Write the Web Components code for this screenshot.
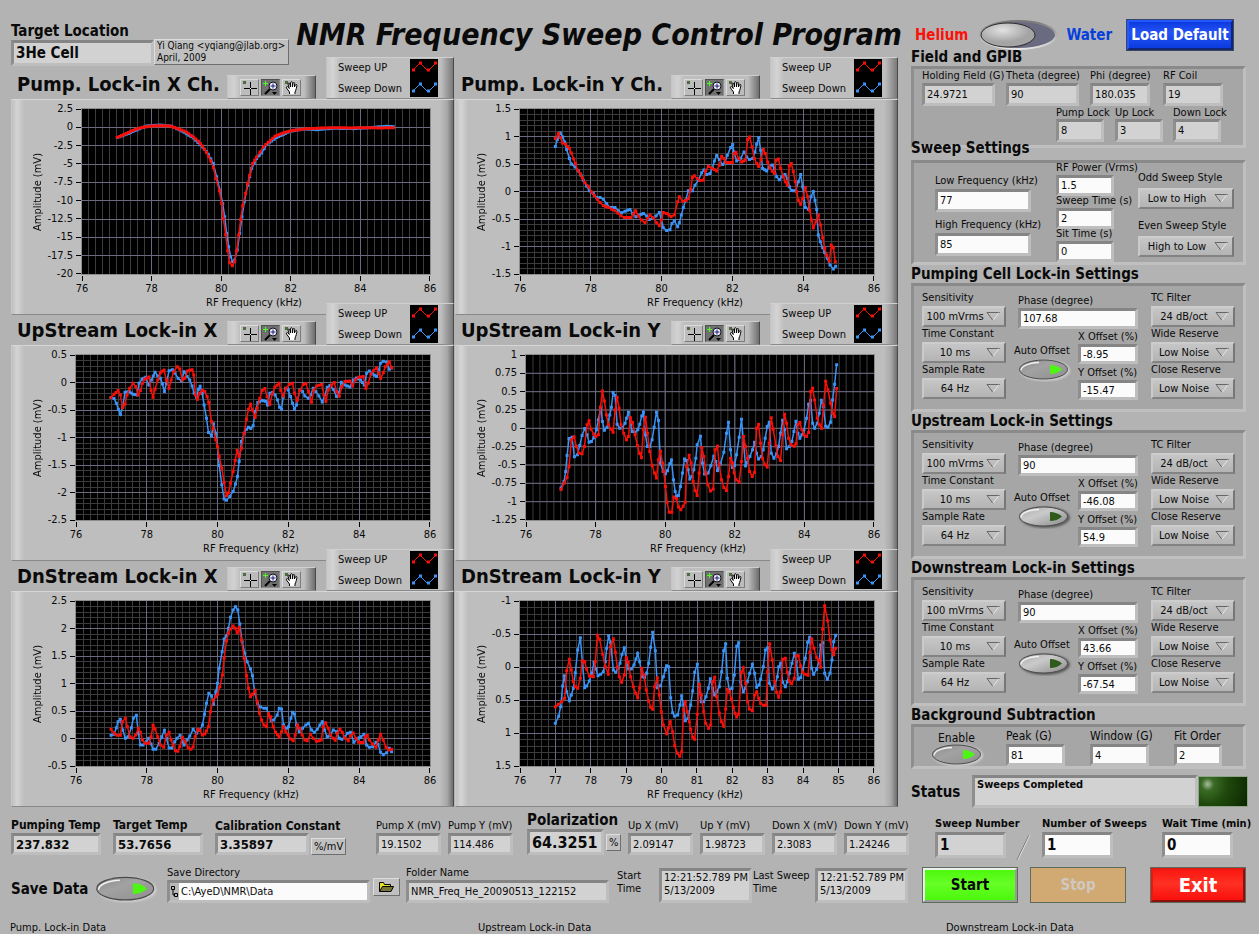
<!DOCTYPE html>
<html lang="en">
<head>
<meta charset="utf-8">
<title>NMR Frequency Sweep Control Program</title>
<style>
  html {
    overflow: hidden;
  }
  body {
    margin: 0;
    background: #b3b3b3;
    color: #0a0a0a;
    font: 11px/14px "DejaVu Sans Condensed", "Noto Sans", sans-serif;
  }
</style>
</head>
<body>
<nmr-app></nmr-app>

<script>
// rules that every shadow root starts with
const base = `
  *, *::before, *::after { box-sizing: border-box; }
  :host { display: block; }
  button, input, select, textarea { font: inherit; color: inherit; margin: 0; border-radius: 0; }
  label { white-space: nowrap; }
`;

function attach(el, html) {
  el.attachShadow({ mode: 'open' }).innerHTML = html;
}

/** Recorded sweeps. Points are plot units inside `box` (x, y, width, height). */
const charts = {
  pumpX: {
    title: 'Pump. Lock-in X Ch.', axis: 71, box: [246, 326, 1044, 496],
    x: [76, 78, 80, 82, 84, 86], y: [2.5, 0, -2.5, -5, -7.5, -10, -12.5, -15, -17.5, -20], xMinor: 10, yMinor: 1,
    up: '352,411 372,403 392,393 412,385 434,380 455,377 480,376 510,377 530,384 545,389 560,396 580,410 595,423 607,437 620,457 632,482 640,502 648,535 658,572 665,610 670,655 677,703 683,752 689,788 697,797 704,785 710,752 716,705 722,658 728,617 737,580 743,550 749,525 758,490 770,470 780,455 790,440 805,426 825,408 850,398 875,391 910,386 950,384 1000,382 1050,383 1100,382 1140,383 1180,382',
    down: '352,412 392,397 412,388 440,377 480,374 515,378 545,392 580,413 607,440 625,462 640,490 650,530 660,570 668,610 674,650 680,700 686,740 692,770 698,785 704,780 712,750 719,700 726,650 733,605 743,555 755,505 770,475 785,458 800,433 830,412 870,393 910,386 950,388 1000,384 1060,385 1110,382 1160,378 1180,379',
  },
  pumpY: {
    title: 'Pump. Lock-in Y Ch.', axis: 65, box: [210, 326, 1062, 496],
    x: [76, 78, 80, 82, 84, 86], y: [1.5, 1, 0.5, 0, -0.5, -1, -1.5], xMinor: 10, yMinor: 5,
    up: '316,415 325,400 331,412 338,428 347,432 358,445 364,458 371,476 376,490 383,510 391,521 397,533 405,548 415,558 425,576 433,586 442,597 450,607 460,616 475,622 485,627 495,632 503,639 513,647 523,652 543,652 550,642 557,632 565,648 575,660 585,668 593,655 600,645 610,653 620,668 628,677 634,660 640,637 650,640 663,649 673,645 683,605 688,590 698,603 708,601 715,595 722,568 727,532 733,527 742,535 750,541 760,540 767,512 775,499 785,503 800,512 808,495 815,468 822,475 828,487 847,487 853,460 858,457 866,475 875,485 886,480 893,418 899,410 906,440 913,475 920,490 926,499 933,478 940,448 946,460 953,485 960,503 967,513 973,520 978,480 985,476 992,505 1000,530 1006,545 1012,555 1018,497 1024,490 1030,515 1036,545 1040,575 1045,600 1052,612 1058,595 1066,562 1073,590 1079,630 1085,660 1090,683 1098,665 1105,645 1112,675 1118,713 1124,745 1130,765 1138,783 1144,735 1150,743 1156,785',
    down: '316,439 322,418 331,398 338,410 344,425 350,448 358,475 365,492 375,500 385,512 393,525 400,540 410,558 418,572 430,580 440,592 450,592 460,597 470,611 480,622 495,622 505,632 515,638 525,633 540,628 548,640 558,650 568,645 580,640 590,648 598,658 608,655 618,648 628,637 634,657 640,683 650,691 660,689 666,670 673,662 683,680 688,668 694,645 700,622 707,600 715,572 727,572 735,555 745,540 755,518 762,509 770,523 780,520 787,503 793,482 800,466 808,478 818,493 825,485 832,465 842,442 848,433 852,455 860,482 872,474 882,455 890,470 898,478 908,475 915,455 920,432 926,412 932,450 938,505 950,512 958,500 967,494 973,505 980,530 988,539 995,530 1005,523 1012,535 1018,560 1025,571 1037,572 1045,545 1052,523 1058,560 1066,622 1075,627 1083,590 1090,574 1095,600 1100,628 1105,705 1111,725 1118,743 1124,757 1132,775 1140,795 1150,807 1157,799',
  },
  upX: {
    title: 'UpStream Lock-in X', axis: 65, box: [229, 165, 1061, 496],
    x: [76, 78, 80, 82, 84, 86], y: [0.5, 0, -0.5, -1, -1.5, -2, -2.5], xMinor: 10, yMinor: 5,
    up: '334,293 343,283 355,272 362,285 369,323 376,312 382,285 390,265 400,250 408,260 415,285 422,272 428,250 435,238 448,231 454,272 460,292 466,268 474,240 482,218 493,210 500,240 508,265 514,240 522,215 532,200 540,207 548,240 555,235 563,213 577,209 582,225 587,285 593,298 600,280 608,271 615,275 622,290 627,308 635,365 640,385 648,420 653,440 658,470 666,505 673,548 680,588 686,580 692,550 700,515 706,482 712,452 718,470 725,445 733,400 740,358 746,328 752,313 758,330 766,352 772,325 780,295 787,272 795,266 802,290 810,313 817,283 825,262 838,250 843,272 850,288 858,265 868,254 878,250 884,280 892,302 900,272 910,254 918,251 926,275 935,307 942,270 950,258 965,254 972,285 978,304 985,270 995,255 1003,248 1010,275 1018,289 1026,260 1035,245 1050,243 1058,258 1066,240 1076,232 1090,230 1098,265 1105,250 1113,222 1120,212 1130,203 1136,220 1142,235 1150,218 1156,200 1168,185 1175,203',
    down: '334,293 343,296 350,310 356,328 362,344 369,320 376,277 388,275 400,283 412,285 418,250 427,238 438,232 447,255 455,240 466,217 474,228 482,235 488,252 494,275 500,250 508,212 518,209 526,220 535,235 545,243 553,215 562,230 570,240 577,258 583,280 590,292 596,268 601,259 607,280 613,315 620,355 626,398 635,407 641,372 648,400 653,440 658,497 666,555 673,598 680,602 690,590 700,575 707,553 713,530 718,485 725,425 733,400 740,388 746,382 753,386 760,378 766,335 774,308 785,301 797,304 803,315 810,280 818,278 826,285 833,300 839,322 845,328 850,292 857,265 865,270 872,290 878,310 884,328 890,315 900,270 908,275 915,288 925,295 932,285 940,265 948,275 957,288 967,306 975,285 982,262 990,257 1000,268 1010,290 1017,278 1024,247 1035,255 1050,261 1060,240 1070,234 1082,240 1093,255 1100,220 1108,213 1118,222 1130,230 1136,210 1142,190 1150,184 1160,186 1168,208 1175,204',
  },
  upY: {
    title: 'UpStream Lock-in Y', axis: 71, box: [229, 165, 1043, 496],
    x: [76, 78, 80, 82, 84, 86], y: [1, 0.75, 0.5, 0.25, 0, -0.25, -0.5, -0.75, -1, -1.25], xMinor: 10, yMinor: 1,
    up: '334,569 343,550 352,533 358,500 365,420 373,411 380,440 388,460 397,462 404,440 412,375 418,363 424,388 432,403 438,410 446,405 452,322 458,273 464,303 470,345 476,375 484,388 490,397 496,330 502,292 508,325 514,375 522,400 530,420 536,410 542,354 548,368 556,405 563,437 569,460 575,473 581,390 587,352 593,400 600,455 607,497 614,520 620,535 626,480 632,454 638,490 642,515 647,560 652,608 658,638 666,638 672,592 680,597 686,622 693,630 700,620 706,608 711,500 718,466 724,490 730,545 736,572 742,587 748,520 756,443 762,470 768,520 774,555 782,574 790,568 796,450 803,439 808,495 815,540 822,563 830,572 836,530 842,475 848,490 853,520 859,540 868,547 875,485 881,410 887,440 893,475 899,515 907,530 914,518 920,385 926,374 932,430 938,475 945,495 952,502 958,430 964,354 970,388 978,438 984,470 992,482 998,405 1004,343 1010,370 1016,415 1023,435 1033,439 1038,432 1044,375 1050,368 1056,390 1062,405 1070,410 1076,398 1082,275 1088,265 1094,300 1102,355 1108,375 1115,385 1121,315 1127,244 1134,270 1142,310 1148,340 1154,350 1160,266',
    down: '334,565 343,545 348,515 352,467 358,416 367,412 374,471 383,465 390,437 397,407 405,386 412,405 418,427 425,425 432,414 440,390 446,360 453,322 458,365 464,391 472,382 480,345 485,322 490,278 496,287 502,373 510,385 518,384 526,370 530,355 536,337 542,375 548,395 556,397 564,390 570,373 576,348 581,337 587,405 593,440 600,440 607,420 613,382 620,337 626,362 632,490 640,515 647,522 653,513 660,492 665,481 671,540 676,575 680,590 686,587 692,560 698,520 704,478 710,482 715,510 720,538 726,530 732,510 738,475 742,435 752,409 758,490 764,523 775,520 783,498 792,469 798,485 803,512 812,492 822,457 830,400 836,367 842,450 848,503 854,497 860,465 868,412 875,358 881,430 887,498 893,487 900,470 908,450 914,427 920,460 926,478 934,470 940,450 946,415 952,380 958,367 964,460 972,475 980,462 986,440 992,400 998,361 1004,390 1010,447 1018,440 1026,425 1032,395 1038,364 1044,400 1050,415 1056,405 1062,390 1070,355 1076,313 1082,302 1088,370 1094,385 1102,370 1108,340 1114,301 1120,320 1127,379 1134,382 1142,367 1148,300 1154,253 1160,194',
  },
  dnX: {
    title: 'DnStream Lock-in X', axis: 65, box: [229, 168, 1061, 495],
    x: [76, 78, 80, 82, 84, 86], y: [2.5, 2, 1.5, 1, 0.5, 0, -0.5], xMinor: 10, yMinor: 5,
    up: '334,553 344,565 352,571 362,571 368,530 377,520 383,545 391,575 400,580 408,570 416,550 422,562 428,585 436,595 448,595 454,575 460,541 466,552 474,575 482,600 492,607 500,570 508,562 514,585 520,600 527,617 534,619 540,605 548,577 556,590 565,608 573,613 580,606 586,575 594,553 600,556 608,570 615,567 620,558 626,545 632,500 640,465 648,455 653,448 660,425 668,390 673,340 680,288 686,265 692,252 700,243 706,250 712,263 718,248 725,285 733,340 740,392 746,430 752,455 758,448 766,436 772,470 779,505 785,525 792,540 800,545 806,506 812,515 820,545 827,562 838,577 845,560 851,545 858,560 865,570 872,582 880,587 886,570 893,540 900,550 907,570 915,585 922,587 932,568 940,580 950,589 964,585 970,545 977,533 985,550 992,570 1000,580 1006,586 1012,565 1020,553 1027,562 1035,580 1045,587 1052,572 1060,564 1068,580 1076,592 1090,593 1096,575 1102,571 1108,585 1118,597 1128,607 1135,585 1142,568 1150,585 1158,607 1166,615 1175,613',
    down: '334,571 343,568 350,548 355,530 362,523 369,555 377,580 385,575 395,548 401,519 410,511 416,565 422,600 430,600 440,590 447,580 454,597 460,613 468,613 478,595 486,575 494,556 500,580 508,609 516,609 525,590 532,580 541,571 548,590 553,600 562,585 570,573 580,553 590,565 600,555 608,540 614,508 620,475 627,445 635,452 641,478 648,440 653,415 658,370 667,320 673,282 680,273 686,250 692,217 700,195 707,185 714,195 720,237 727,290 735,325 742,350 752,372 758,392 765,445 773,475 782,486 792,490 800,490 806,510 814,527 822,525 832,510 838,490 845,492 851,540 860,550 866,545 873,520 878,502 884,507 890,540 898,560 908,550 918,540 926,535 935,555 943,562 952,553 960,540 967,530 974,555 982,575 990,572 1000,555 1010,560 1018,580 1026,583 1035,575 1043,565 1052,562 1062,592 1072,582 1083,575 1092,568 1100,600 1108,607 1118,605 1128,592 1134,598 1142,622 1150,629 1160,623 1168,610 1175,620',
  },
  dnY: {
    title: 'DnStream Lock-in Y', axis: 65, box: [210, 168, 1062, 495],
    x: [76, 77, 78, 79, 80, 81, 82, 83, 84, 85, 86], y: [-1, -0.5, 0, 0.5, 1, 1.5], xMinor: 5, yMinor: 5,
    up: '316,485 325,478 335,470 344,460 350,377 358,343 364,375 370,410 376,425 383,430 391,400 397,347 404,350 410,373 418,393 430,395 436,350 442,271 449,283 458,328 466,365 475,388 481,305 490,281 496,322 502,367 508,395 515,412 523,390 529,338 535,352 542,395 550,425 557,445 563,458 569,428 575,370 582,390 589,435 596,468 602,487 608,493 614,425 622,398 628,450 634,500 640,540 650,566 655,550 661,530 668,560 674,602 682,625 689,634 695,620 701,495 706,470 712,500 718,530 722,553 728,577 734,583 742,508 748,418 754,450 761,500 767,535 776,550 782,540 788,410 794,397 800,455 808,505 814,530 821,544 827,492 832,433 838,440 844,462 850,487 855,505 860,516 866,507 874,382 880,368 887,415 893,470 898,492 907,497 914,450 920,440 926,460 932,475 940,481 948,481 953,380 959,296 967,345 974,410 980,442 986,457 992,440 998,343 1006,340 1012,382 1018,408 1025,416 1033,400 1039,332 1045,332 1052,362 1058,382 1066,388 1074,391 1080,322 1085,281 1092,310 1100,338 1106,345 1112,367 1118,253 1124,182 1133,227 1140,285 1146,315 1151,329 1157,310',
    down: '316,535 326,514 332,485 338,423 343,392 350,440 358,467 364,450 370,430 376,383 383,315 391,278 397,350 404,428 410,423 418,408 425,385 432,352 438,372 444,392 452,388 460,380 466,350 470,310 476,272 482,293 490,375 497,382 504,370 510,355 516,328 523,308 529,345 536,372 544,372 552,360 558,342 563,325 569,350 577,395 584,398 590,385 596,355 602,307 608,262 616,317 622,428 632,422 640,395 646,375 650,362 656,365 662,458 668,503 674,514 683,510 690,480 695,452 701,480 706,527 714,520 722,480 728,438 734,382 742,358 748,425 754,470 761,470 768,455 775,430 781,401 788,430 794,450 800,440 808,425 815,380 821,317 827,296 832,400 838,435 846,430 853,390 860,304 866,293 872,410 880,440 886,430 892,410 899,385 907,358 914,385 920,427 927,420 932,403 940,365 946,315 953,308 958,415 967,432 975,420 982,395 986,365 992,355 998,412 1006,425 1012,410 1018,385 1026,355 1033,325 1039,350 1045,403 1052,398 1058,375 1066,340 1073,292 1079,277 1085,370 1091,388 1100,373 1108,345 1112,300 1118,293 1124,385 1132,403 1140,385 1146,345 1151,290 1157,271',
  },
};

// fills long segments so that a marker comes about every 7 units
function samples(str) {
  const pts = str.split(' ').map((p) => p.split(',').map(Number));
  const out = [pts[0]];
  for (let i = 1; i < pts.length; i++) {
    const [x0, y0] = pts[i - 1];
    const [x1, y1] = pts[i];
    const n = Math.max(1, Math.round((x1 - x0) / 7));
    for (let k = 1; k <= n; k++) {
      out.push([x0 + (x1 - x0) * k / n, y0 + (y1 - y0) * k / n]);
    }
  }
  return out;
}

function gridPath([x, y, w, h], nx, ny) {
  let d = '';
  for (let i = 1; i < nx; i++) d += `M${x + w * i / nx} ${y}v${h}`;
  for (let i = 1; i < ny; i++) d += `M${x} ${y + h * i / ny}h${w}`;
  return d;
}

class LvTools extends HTMLElement {
  connectedCallback() {
    attach(this, `
<style>
  ${base}
  :host {
    display: flex;
    justify-content: center;
    gap: 2px;
    width: 89px;
    height: 24px;
    padding: 3px 2px 0 0;
    background: linear-gradient(90deg, #c8c8c8, #d2d2d2 6px, #bebebe 12px, #bebebe 76px, #6e6e6e);
    border: 1px solid;
    border-color: #cfcfcf #4a4a4a #8a8a8a #c4c4c4;
  }
  button {
    width: 19px;
    height: 17px;
    padding: 0;
    border: 1px solid;
    border-color: #dcdcdc #7c7c7c #7c7c7c #dcdcdc;
    background: #bcbcbc;
  }
  button[aria-pressed=true] {
    background: #707070;
    border-color: #505050 #8c8c8c #8c8c8c #505050;
  }
  svg { display: block; }
</style>
<button aria-label="Cursor"><svg width="17" height="15"><path fill="#4d6b3c" d="M2 1h3v3H2z"/><path stroke="#000" d="M9.500 2v13M3 8.500h13"/><path fill="#fff" d="M9 8h1v1H9z"/></svg></button>
<button aria-label="Zoom" aria-pressed="true"><svg width="17" height="15"><path stroke="#4cff1c" d="M1 3.500h5M3.500 1v5"/><path stroke="#000" stroke-width="2" d="M8 9l-5 5"/><circle cx="11" cy="6" r="4" fill="#e8e8ff" stroke="#111"/><path stroke="#22226a" d="M8.500 6h5M11 3.500v5"/><path d="M10 12h5l-2.500 3z"/></svg></button>
<button aria-label="Pan"><svg width="17" height="15"><path fill="#4d6b3c" d="M2 1h3v3H2z"/><path fill="#fff" stroke="#000" d="M6.500 14v-2l-3-4c-.5-1.500 1-2 2-.5l.8 1L5 4c0-1.200 1.500-1.300 1.800 0l.7 3V2.700c0-1.300 1.800-1.300 1.900 0V7l.6-3.700c.2-1.200 1.800-1 1.700.2L11.400 7l1-2c.5-1 1.800-.5 1.500.6-.4 2-.7 4-1.900 6.400v2"/></svg></button>`);
  }
}

class LvLegend extends HTMLElement {
  connectedCallback() {
    attach(this, `
<style>
  ${base}
  :host {
    display: flex;
    justify-content: space-between;
    width: 128px;
    height: 42px;
    padding: 1px 15px 0 11px;
    background: linear-gradient(90deg, #c8c8c8, #d4d4d4 6px, #bebebe 13px, #bebebe 114px, #7a7a7a);
    border: 1px solid;
    border-color: #d0d0d0 #4a4a4a #8a8a8a #c4c4c4;
  }
  span { display: block; line-height: 21px; margin-top: -2px; }
  span + span { margin-top: 0; }
  svg { background: #000; display: block; }
</style>
<div><span>Sweep UP</span><span>Sweep Down</span></div>
<svg width="28" height="38" fill="none">
  <g stroke="#f80f08"><path d="M3 11l7-7 8 8 8-8"/><path stroke-width="3" d="M2 11h3M9 4h3M17 11h3M24 4h3"/></g>
  <g stroke="#3a93f5"><path d="M3 32l7-7 8 8 8-8"/><path stroke-width="3" d="M2 32h3M9 25h3M17 32h3M24 25h3"/></g>
</svg>`);
  }
}

class LvChart extends HTMLElement {
  connectedCallback() {
    const c = charts[this.getAttribute('data')];
    const trace = (str, color) => {
      const pts = samples(str);
      return `<g stroke="${color}"><path class="line" d="M${pts.map((p) => p.join(' ')).join('L')}"/>
        <path class="dots" d="${pts.map((p) => `M${p.join(' ')}h.01`).join('')}"/></g>`;
    };
    const nx = c.x.length - 1;
    const ny = c.y.length - 1;
    attach(this, `
<style>
  ${base}
  :host { height: 258px; min-width: 0; }
  header { display: flex; align-items: flex-end; height: 42px; }
  h2 {
    flex: 1;
    margin: 0;
    padding-left: 6px;
    font-size: 20px;
    line-height: 29px;
    white-space: nowrap;
  }
  lv-legend { margin-left: 10px; }
  section {
    display: grid;
    grid-template: 9px 165px auto / 34px ${c.axis - 35}px 1fr 23px;
    height: 216px;
    background:
      linear-gradient(270deg, #6e6e6e, #a8a8a8 6px, #bebebe 13px, transparent 13px),
      linear-gradient(90deg, #c0c0c0, #d4d4d4 5px, #bebebe 12px);
    border: 1px solid;
    border-color: #d6d6d6 #4a4a4a #888 #c8c8c8;
  }
  .name {
    grid-area: 2 / 1;
    place-self: center end;
    writing-mode: vertical-rl;
    transform: rotate(180deg);
    line-height: 16px;
  }
  ol { list-style: none; margin: 0; padding: 0; display: flex; justify-content: space-between; line-height: 12px; }
  .y { grid-area: 2 / 2; flex-direction: column; }
  .y li { height: 0; display: flex; align-items: center; justify-content: flex-end; }
  .y li::after { content: ""; width: 5px; height: 1px; margin: 0 1px 0 3px; background: #000; }
  .x { grid-area: 3 / 3; height: 21px; padding-top: 2px; }
  .x li { width: 0; display: flex; flex-direction: column; align-items: center; gap: 2px; }
  .x li::before { content: ""; width: 1px; height: 5px; background: #000; }
  svg { grid-area: 2 / 3; width: 100%; height: 100%; background: #000; outline: 1px solid #8c8c8c; fill: none; }
  path { vector-effect: non-scaling-stroke; stroke-width: 1px; }
  .grid { shape-rendering: crispEdges; }
  .line { stroke-width: 1.5px; }
  .dots { stroke-width: 3px; stroke-linecap: square; }
  .xname { grid-area: 3 / 3; justify-self: center; align-self: start; margin-top: 22px; padding-right: 4px; }
</style>
<header><h2>${c.title}</h2><lv-tools></lv-tools><lv-legend></lv-legend></header>
<section>
  <div class="name">Amplitude (mV)</div>
  <ol class="y">${c.y.map((v) => `<li>${v}</li>`).join('')}</ol>
  <svg viewBox="${c.box.join(' ')}" preserveAspectRatio="none">
    <path class="grid" stroke="#3c3c3c" d="${gridPath(c.box, nx * c.xMinor, ny * c.yMinor)}"/>
    <path class="grid" stroke="#6a6a80" d="${gridPath(c.box, nx, ny)}"/>
    ${trace(c.down, '#3a93f5')}
    ${trace(c.up, '#f80f08')}
  </svg>
  <ol class="x">${c.x.map((v) => `<li>${v}</li>`).join('')}</ol>
  <div class="xname">RF Frequency (kHz)</div>
</section>`);
  }
}

// text box with its caption; "readonly" makes it an indicator
class LvField extends HTMLElement {
  connectedCallback() {
    const ro = this.hasAttribute('readonly') ? 'readonly' : '';
    const value = this.getAttribute('value');
    const rows = this.getAttribute('rows');
    const label = this.getAttribute('label');
    attach(this, `
<style>
  ${base}
  label { display: block; line-height: var(--lh, 14px); font-size: var(--ls, 11px); }
  label:empty { display: none; }
  div { display: flex; align-items: flex-end; gap: 2px; position: relative; }
  input, textarea {
    display: block;
    width: var(--w, 100%);
    height: var(--h, 23px);
    padding: 0 0 0 var(--pad, 2px);
    resize: none;
    overflow: hidden;
    outline: none;
    border: 3px solid;
    border-color: #858585 #bebebe #bebebe #8e8e8e;
    background: #fbfbfb;
  }
  textarea { line-height: 13px; white-space: pre; }
  [readonly] { background: #d2d2d2; }
  ::slotted([slot=lead]) { position: absolute; left: 3px; top: 3px; background: #b8b8b8; }
</style>
<label for="v">${label || ''}</label>
<div>${rows
    ? `<textarea id="v" rows="${rows}" ${ro}>${value}</textarea>`
    : `<input id="v" value="${value}" ${ro}>`}<slot name="lead"></slot><slot></slot></div>`);
    if (!label) this.shadowRoot.querySelector('#v').setAttribute('aria-label', this.getAttribute('name'));
  }
}

class LvRing extends HTMLElement {
  connectedCallback() {
    attach(this, `
<style>
  ${base}
  label { display: block; height: var(--lh, 15px); line-height: 13px; }
  div { display: grid; grid-template-columns: var(--w, 84px); }
  select {
    grid-area: 1 / 1;
    min-width: 0;
    width: 100%;
    appearance: none;
    height: 21px;
    padding: 0 18px 0 0;
    text-align: center;
    text-align-last: center;
    background: linear-gradient(#c6c6c6, #b4b4b4);
    border: 2px solid;
    border-color: #cdcdcd #777 #838383 #cacaca;
    outline: none;
  }
  svg { grid-area: 1 / 1; place-self: center end; margin-right: 6px; pointer-events: none; fill: none; }
</style>
<label for="v">${this.getAttribute('label')}</label>
<div><select id="v"><option>${this.getAttribute('value')}</option></select>
<svg width="14" height="9"><path stroke="#666" d="M14 .5H1l6 8"/><path stroke="#e4e4e4" d="M7 8.500l6-8"/></svg></div>`);
  }
}

class LvPush extends HTMLElement {
  connectedCallback() {
    const on = this.hasAttribute('on');
    attach(this, `
<style>
  ${base}
  :host { width: var(--w, 54px); }
  button { display: block; width: 100%; padding: 0; border: 0; background: none; }
  svg { display: block; width: 100%; }
</style>
<button aria-pressed="${on}" aria-label="${this.getAttribute('name')}">
<svg viewBox="0 0 54 24">
  <defs>
    <linearGradient id="f" x2="1" y2="1"><stop stop-color="${on ? '#8a8a8a' : '#a8a8a8'}"/><stop offset=".4" stop-color="${on ? '#a2a2a2' : '#cacaca'}"/><stop offset="1" stop-color="${on ? '#8e8e8e' : '#8a8a8a'}"/></linearGradient>
    <filter id="s" x="-20%" y="-20%" width="140%" height="150%"><feGaussianBlur stdDeviation="1"/></filter>
  </defs>
  <ellipse cx="27" cy="12.500" rx="25" ry="10.500" fill="${on ? '#cfcfcf' : '#5c5c5c'}" filter="url(#s)"/>
  <ellipse cx="25.500" cy="11.500" rx="24" ry="9.500" fill="url(#f)" stroke="#4a4a4a"/>
  <path fill="none" stroke="#f2f2f2" stroke-width="1.300" d="M3 12.500c0-4 7-7.500 18-8"/>
  <path fill="${on ? '#4df512' : '#2f5a1c'}" d="M32 7q7 0 12 4.500q-5 4.500-12 4.500z"/>
</svg></button>`);
  }
}

class LvGroup extends HTMLElement {
  connectedCallback() {
    attach(this, `
<style>
  ${base}
  h2 { margin: 0 0 var(--gap, 0px); font-size: 15px; line-height: 18px; position: relative; }
  div {
    height: var(--box);
    background: #a6a6a6;
    border: 3px solid;
    border-color: #8a8a8a #bfbfbf #bfbfbf #8e8e8e;
  }
</style>
<h2>${this.getAttribute('heading')}</h2>
<div><slot></slot></div>`);
  }
}

class NmrLockin extends HTMLElement {
  connectedCallback() {
    const a = (n) => this.getAttribute(n);
    attach(this, `
<style>
  ${base}
  lv-group { --box: 129px; }
  .cols { display: grid; grid-template-columns: 92px 1fr 92px; padding: 5px 0 0 8px; }
  .mid { padding-top: 3px; width: 124px; --h: 20px; }
  .phase { margin-left: 4px; --h: 21px; }
  .row { display: grid; grid-template-columns: 64px 60px; margin-top: 1px; }
  .row lv-field + lv-field { margin-top: 2px; }
  .auto { padding-top: 14px; white-space: nowrap; }
  lv-push { margin-left: 4px; }
</style>
<lv-group heading="${a('heading')}">
  <div class="cols">
    <div>
      <lv-ring label="Sensitivity" value="100 mVrms"></lv-ring>
      <lv-ring label="Time Constant" value="10 ms"></lv-ring>
      <lv-ring label="Sample Rate" value="64 Hz"></lv-ring>
    </div>
    <div class="mid">
      <lv-field class="phase" label="Phase (degree)" value="${a('phase')}"></lv-field>
      <div class="row">
        <div class="auto">Auto Offset<lv-push name="Auto Offset" ${this.hasAttribute('auto') ? 'on' : ''}></lv-push></div>
        <div>
          <lv-field label="X Offset (%)" value="${a('x')}"></lv-field>
          <lv-field label="Y Offset (%)" value="${a('y')}"></lv-field>
        </div>
      </div>
    </div>
    <div>
      <lv-ring label="TC Filter" value="24 dB/oct"></lv-ring>
      <lv-ring label="Wide Reserve" value="Low Noise"></lv-ring>
      <lv-ring label="Close Reserve" value="Low Noise"></lv-ring>
    </div>
  </div>
</lv-group>`);
  }
}

class NmrApp extends HTMLElement {
  connectedCallback() {
    attach(this, `
<style>
  ${base}
  main { display: grid; grid-template-columns: 1fr 348px; }
  .left { padding-left: 11px; min-width: 0; }
  .head { display: flex; height: 57px; padding-top: 23px; }
  .head lv-field { flex: none; width: 143px; font-weight: bold; font-size: 15px; --ls: 15px; --lh: 17px; --h: 26px; }
  .tag {
    border: 1px solid;
    border-color: #dedede #6e6e6e #6e6e6e #dedede;
    background: #c0c0c0;
    padding: 0 2px;
    white-space: nowrap;
  }
  .author { flex: none; margin-top: 16px; width: 135px; height: 26px; font-size: 10px; line-height: 12px; }
  h1 { flex: 1; margin: -8px 9px 0 0; text-align: right; font-size: 30px; line-height: 40px; font-style: italic; white-space: nowrap; }
  .charts { display: grid; grid-template-columns: 1fr 1fr; column-gap: 1px; grid-auto-rows: 246px; margin-right: 13px; padding-bottom: 12px; }
  .reads {
    display: grid;
    grid-template-columns: 102fr 102fr 161fr 72fr 79fr 101fr 72fr 72fr 72fr 67fr;
    align-items: end;
    height: 48px;
    --w: 65px;
    --h: 22px;
  }
  .reads .big { --w: 90px; --ls: 12px; --lh: 16px; font-weight: bold; font-size: 13px; }
  .reads .cal { --w: 94px; --lh: 13px; }
  .reads .pol { --w: 77px; --h: 26px; --ls: 15px; --lh: 18px; font-weight: bold; font-size: 16px; }
  .reads .tag { font-weight: normal; font-size: 11px; line-height: 15px; }
  .pol .tag { align-self: center; }
  .save {
    display: grid;
    grid-template-columns: 84fr 72fr 206fr 33fr 211fr 42fr 94fr 62fr 96fr;
    align-items: end;
    height: 48px;
    line-height: 13px;
  }
  .save > b { align-self: center; font-size: 15px; line-height: 18px; padding-top: 20px; }
  .save lv-push { --w: 64px; }
  .save span { align-self: start; padding-top: 14px; }
  .time { --w: 93px; --h: 35px; }
  .path { --w: 203px; }
  .dir { --pad: 11px; }
  .folder { width: 27px; height: 18px; padding: 0; margin-bottom: 7px; background: #c0c0c0; border: 1px solid; border-color: #dcdcdc #6e6e6e #6e6e6e #dcdcdc; }
  .folder svg { display: block; margin: auto; }
  .top { display: flex; align-items: center; height: 51px; padding: 19px 25px 0 4px; margin-bottom: -3px; font-size: 15px; font-weight: bold; }
  .top button.sw { border: 0; padding: 0; background: none; margin: 0 8px 0 10px; }
  .top svg { display: block; }
  .load { margin-left: auto; width: 108px; height: 32px; padding: 0; color: #fff; font-weight: bold; white-space: nowrap; border: 3px outset #1b43c4; outline: 1px solid #3c4664; outline-offset: -1px; background: linear-gradient(#0c3be0, #2552f4 40%, #0b3ce0); }
  .groups { margin-right: 13px; }
  .f1 { display: grid; grid-template-columns: 84px 84px 73px 1fr; padding-left: 8px; }
  .f2 { display: grid; grid-template-columns: 59px 58px 1fr; padding-left: 142px; --w: 48px; --lh: 13px; }
  .sweep { display: grid; grid-template-columns: 121px 82px 1fr; padding-left: 21px; }
  .freq { padding-top: 9px; --w: 96px; --lh: 17px; }
  .freq lv-field + lv-field { margin-top: 4px; }
  .rf { --w: 58px; --h: 21px; }
  .rf lv-field { margin-top: -2px; }
  .style { padding-top: 8px; --w: 96px; --lh: 17px; }
  .style lv-ring + lv-ring { margin-top: 10px; }
  .bg { display: grid; grid-template-columns: 73px 84px 84px 1fr; padding: 2px 0 0 19px; --ls: 12px; --lh: 15px; --h: 22px; }
  .enable { font-size: 12px; padding-top: 2px; padding-left: 5px; }
  .enable lv-push { margin: -2px 0 0 -7px; }
  .status { display: flex; align-items: center; margin: 6px 11px 0 0; height: 33px; font-weight: bold; }
  .status b { width: 61px; font-size: 15px; line-height: 18px; }
  .status lv-field { flex: 1; --h: 33px; }
  .led { width: 50px; height: 31px; border: 1px solid #8fa58a; background: radial-gradient(circle at 18% 25%, #a9bda0, #3a6a25 14%, #1f480c 45%, #0c2600); }
  .runs { display: grid; grid-template-columns: 107px 120px 1fr; padding: 8px 0 0 24px; font-size: 15px; font-weight: bold; --ls: 11px; --lh: 16px; --h: 26px; --w: 71px; }
  .runs svg { display: block; margin: 0 0 -4px 8px; }
  .go { display: grid; grid-template-columns: 108px 120px 96px; padding: 9px 13px 0 11px; }
  .go button { width: 96px; height: 36px; font-size: 15px; font-weight: bold; padding: 0; border: 3px outset; outline: 1px solid #5c6b5c; outline-offset: -1px; }
  .start { background: linear-gradient(#4cf80c, #66ff26 45%, #4cf80c); border-color: #4fe01c; }
  .go .stop { background: #d0a973; color: #cfc8c0; border: 1px solid #8e8474; }
  .go .exit { background: linear-gradient(#fa1810, #ff3024 45%, #fa100c); color: #fff; border-color: #e01c14; font-size: 20px; }
  footer { display: grid; grid-template-columns: 468fr 468fr 313fr; padding-left: 10px; margin-top: 19px; line-height: 12px; }
</style>
<main>
  <div class="left">
    <div class="head">
      <lv-field label="Target Location" value="3He Cell" readonly></lv-field>
      <div class="tag author">Yi Qiang &lt;yqiang@jlab.org&gt;<br>April, 2009</div>
      <h1>NMR Frequency Sweep Control Program</h1>
    </div>
    <div class="charts">
      ${Object.keys(charts).map((k) => `<lv-chart data="${k}"></lv-chart>`).join('')}
    </div>
    <div class="reads">
      <lv-field class="big" label="Pumping Temp" value="237.832" readonly></lv-field>
      <lv-field class="big" label="Target Temp" value="53.7656" readonly></lv-field>
      <lv-field class="big cal" label="Calibration Constant" value="3.35897" readonly><span class="tag">%/mV</span></lv-field>
      <lv-field label="Pump X (mV)" value="19.1502" readonly></lv-field>
      <lv-field label="Pump Y (mV)" value="114.486" readonly></lv-field>
      <lv-field class="pol" label="Polarization" value="64.3251" readonly><span class="tag">%</span></lv-field>
      <lv-field label="Up X (mV)" value="2.09147" readonly></lv-field>
      <lv-field label="Up Y (mV)" value="1.98723" readonly></lv-field>
      <lv-field label="Down X (mV)" value="2.3083" readonly></lv-field>
      <lv-field label="Down Y (mV)" value="1.24246" readonly></lv-field>
    </div>
    <div class="save">
      <b>Save Data</b>
      <lv-push name="Save Data" on></lv-push>
      <lv-field class="path dir" label="Save Directory" value="C:\\AyeD\\NMR\\Data"><svg slot="lead" width="9" height="17" fill="none" stroke="#000"><path d="M1.500 3.500h3v3h-3zM4.500 10.500h3v3h-3zM3 7v5h1"/></svg></lv-field>
      <button class="folder" aria-label="Browse"><svg width="17" height="12"><path fill="#e8e020" stroke="#000" d="M1.500 10.500v-9h4l1 2h6v2"/><path fill="#77773a" stroke="#000" d="M1.500 10.500l3-5h11l-2.500 5z"/></svg></button>
      <lv-field class="path" label="Folder Name" value="NMR_Freq_He_20090513_122152" readonly></lv-field>
      <span>Start<br>Time</span>
      <lv-field class="time" name="Start Time" rows="2" value="12:21:52.789 PM&#10;5/13/2009" readonly></lv-field>
      <span>Last Sweep<br>Time</span>
      <lv-field class="time" name="Last Sweep Time" rows="2" value="12:21:52.789 PM&#10;5/13/2009" readonly></lv-field>
    </div>
  </div>
  <div>
    <div class="top">
      <span style="color:#fb1108">Helium</span>
      <button class="sw" role="switch" aria-checked="false" aria-label="Helium or Water">
        <svg width="80" height="32">
          <defs><radialGradient id="k" cx=".4" cy=".3"><stop stop-color="#e2e2e2"/><stop offset="1" stop-color="#a4a4a4"/></radialGradient>
          <linearGradient id="r" x2="0" y2="1"><stop stop-color="#777"/><stop offset="1" stop-color="#e6e6e6"/></linearGradient></defs>
          <ellipse cx="40" cy="16" rx="38" ry="14" fill="#6a6a80" stroke="url(#r)" stroke-width="2"/>
          <ellipse cx="30" cy="16" rx="27" ry="12" fill="url(#k)" stroke="#2c2c2c"/>
        </svg>
      </button>
      <span style="color:#0540dc">Water</span>
      <button class="load">Load Default</button>
    </div>
    <div class="groups">
      <lv-group heading="Field and GPIB" style="--box:82px;margin-bottom:-9px">
        <div class="f1">
          <lv-field label="Holding Field (G)" value="24.9721" style="--w:73px" readonly></lv-field>
          <lv-field label="Theta (degree)" value="90" style="--w:73px" readonly></lv-field>
          <lv-field label="Phi (degree)" value="180.035" style="--w:60px" readonly></lv-field>
          <lv-field label="RF Coil" value="19" style="--w:60px" readonly></lv-field>
        </div>
        <div class="f2">
          <lv-field label="Pump Lock" value="8" readonly></lv-field>
          <lv-field label="Up Lock" value="3" readonly></lv-field>
          <lv-field label="Down Lock" value="4" readonly></lv-field>
        </div>
      </lv-group>
      <lv-group heading="Sweep Settings" style="--gap:3px;--box:105px">
        <div class="sweep">
          <div class="freq">
            <lv-field label="Low Frequency (kHz)" value="77"></lv-field>
            <lv-field label="High Frequency (kHz)" value="85"></lv-field>
          </div>
          <div class="rf">
            <lv-field label="RF Power (Vrms)" value="1.5"></lv-field>
            <lv-field label="Sweep Time (s)" value="2"></lv-field>
            <lv-field label="Sit Time (s)" value="0"></lv-field>
          </div>
          <div class="style">
            <lv-ring label="Odd Sweep Style" value="Low to High"></lv-ring>
            <lv-ring label="Even Sweep Style" value="High to Low"></lv-ring>
          </div>
        </div>
      </lv-group>
      <nmr-lockin heading="Pumping Cell Lock-in Settings" phase="107.68" x="-8.95" y="-15.47" auto></nmr-lockin>
      <nmr-lockin heading="Upstream Lock-in Settings" phase="90" x="-46.08" y="54.9"></nmr-lockin>
      <nmr-lockin heading="Downstream Lock-in Settings" phase="90" x="43.66" y="-67.54"></nmr-lockin>
      <lv-group heading="Background Subtraction" style="--box:45px">
        <div class="bg">
          <div class="enable">Enable<lv-push name="Enable" on></lv-push></div>
          <lv-field label="Peak (G)" value="81" style="--w:59px"></lv-field>
          <lv-field label="Window (G)" value="4" style="--w:59px"></lv-field>
          <lv-field label="Fit Order" value="2" style="--w:48px"></lv-field>
        </div>
      </lv-group>
    </div>
    <div class="status">
      <b>Status</b>
      <lv-field name="Status" rows="2" value="Sweeps Completed" readonly></lv-field>
      <div class="led"></div>
    </div>
    <div class="runs">
      <lv-field label="Sweep Number" value="1" readonly><svg width="16" height="28"><path stroke="#777" d="M1 26L13 1"/><path stroke="#ddd" d="M2 26L14 1"/></svg></lv-field>
      <lv-field label="Number of Sweeps" value="1"></lv-field>
      <lv-field label="Wait Time (min)" value="0"></lv-field>
    </div>
    <div class="go">
      <button class="start">Start</button>
      <button class="stop" disabled>Stop</button>
      <button class="exit">Exit</button>
    </div>
  </div>
</main>
<footer><div>Pump. Lock-in Data</div><div>Upstream Lock-in Data</div><div>Downstream Lock-in Data</div></footer>`);
  }
}

customElements.define('lv-tools', LvTools);
customElements.define('lv-legend', LvLegend);
customElements.define('lv-chart', LvChart);
customElements.define('lv-field', LvField);
customElements.define('lv-ring', LvRing);
customElements.define('lv-push', LvPush);
customElements.define('lv-group', LvGroup);
customElements.define('nmr-lockin', NmrLockin);
customElements.define('nmr-app', NmrApp);
</script>
</body>
</html>
